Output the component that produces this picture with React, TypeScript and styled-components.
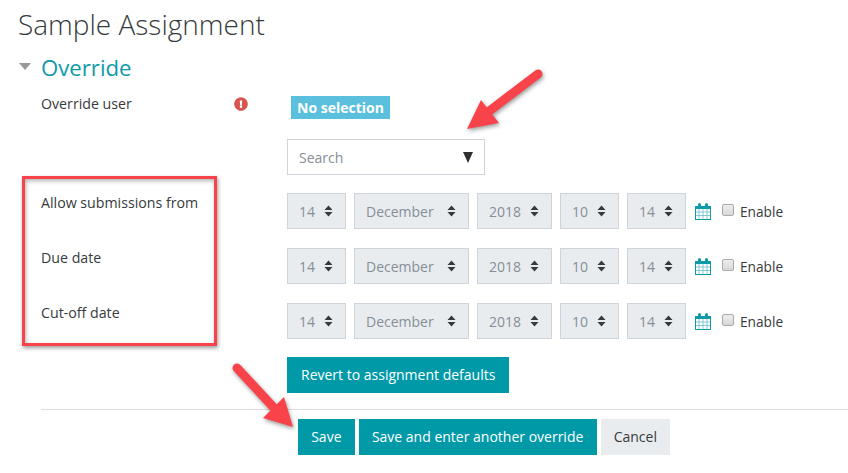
import React from "react";
import styled, { createGlobalStyle } from "styled-components";
import { FaExclamationCircle } from "react-icons/fa";

const GlobalStyle = createGlobalStyle`
  html, body {
    margin: 0;
    padding: 0;
    background: #fff;
    overflow: hidden;
  }

  body {
    font-family: "Open Sans", "Liberation Sans", sans-serif;
    color: #373a3c;
  }
`;

const Page = styled.div`
  position: relative;
  width: 848px;
  height: 473px;
  overflow: hidden;
`;

const Title = styled.h1`
  margin: 0 0 0 18px;
  padding-top: 5px;
  height: 45px;
  font-size: 28px;
  line-height: 38px;
  font-weight: 300;
  color: #373a3c;
`;

const SectionHeader = styled.div`
  display: flex;
  align-items: center;
  gap: 10px;
  margin-left: 19px;
  height: 36px;
`;

const Caret = styled.span`
  width: 0;
  height: 0;
  border-left: 6px solid transparent;
  border-right: 6px solid transparent;
  border-top: 7px solid #999;
  margin-top: -3px;
`;

const SectionTitle = styled.h2`
  margin: 0 0 1px;
  font-size: 22.2px;
  line-height: 34px;
  font-weight: 400;
  color: #0f9aa9;
`;

const Form = styled.div`
  margin-left: 41px;
  display: flex;
  flex-direction: column;
  padding-top: 7px;
`;

const Row = styled.div<{ $gap?: number }>`
  display: grid;
  grid-template-columns: 193px 53px 1fr;
  align-items: start;
  margin-bottom: ${(p) => p.$gap ?? 19}px;
`;

const Label = styled.div<{ $top?: number }>`
  margin-top: ${(p) => p.$top ?? 0}px;
  font-size: 14.2px;
  line-height: 20px;
`;

const Required = styled.div`
  margin-top: 4px;
  color: #d9534f;
  font-size: 14px;
  display: flex;
`;

const Badge = styled.span`
  justify-self: start;
  margin: 3px 0 0 4px;
  padding: 0 6px;
  height: 23px;
  line-height: 23px;
  background: #5bc0de;
  color: #fff;
  font-size: 14px;
  font-weight: 700;
`;

const SearchBox = styled.div`
  box-sizing: border-box;
  width: 198px;
  height: 36px;
  border: 1px solid #ced4da;
  display: flex;
  align-items: center;
  justify-content: space-between;
  padding: 0 11px;
  color: #868e96;
  font-size: 14px;
`;

const DownArrow = styled.span`
  width: 0;
  height: 0;
  border-left: 5.5px solid transparent;
  border-right: 5.5px solid transparent;
  border-top: 11px solid #2f2f2f;
`;

const Controls = styled.div`
  display: flex;
  align-items: center;
`;

const Select = styled.div<{ $width: number }>`
  box-sizing: border-box;
  width: ${(p) => p.$width}px;
  height: 36px;
  margin-right: 8px;
  padding: 0 12px 0 11px;
  display: flex;
  align-items: center;
  justify-content: space-between;
  background: #e9ecef;
  border: 1px solid #ced4da;
  color: #868e96;
  font-size: 14px;
`;

const CalendarWrap = styled.span`
  display: flex;
  margin: 0 11px 0 1px;
`;

const Checkbox = styled.span`
  box-sizing: border-box;
  width: 12px;
  height: 12px;
  margin: -3px 6px 0 0;
  border: 1px solid #a9a9a9;
  border-radius: 2px;
  background: linear-gradient(#eee, #d8d8d8);
`;

const CheckLabel = styled.span`
  font-size: 13.7px;
`;

const Button = styled.div<{ $secondary?: boolean }>`
  height: 36px;
  line-height: 36px;
  padding: 0 13.2px;
  font-size: 14px;
  background: ${(p) => (p.$secondary ? "#e9ecef" : "#0099a8")};
  color: ${(p) => (p.$secondary ? "#373a3c" : "#fff")};
`;

const RevertButton = styled(Button)`
  grid-column: 3;
  justify-self: start;
  padding: 0 14px;
`;

const Divider = styled.hr`
  margin: 0 0 9px 41px;
  border: 0;
  border-top: 1px solid #dfdfdf;
`;

const ButtonRow = styled.div`
  display: flex;
  gap: 4px;
  margin-left: 298px;
`;

const Highlight = styled.div`
  position: absolute;
  left: 22px;
  top: 176px;
  box-sizing: border-box;
  width: 195px;
  height: 170px;
  border: 3px solid #f9434a;
  box-shadow: 1px 2px 4px rgba(0, 0, 0, 0.4), inset 1px 2px 4px rgba(0, 0, 0, 0.3);
`;

const ArrowSvg = styled.svg`
  position: absolute;
  left: 0;
  top: 0;
  overflow: visible;
  filter: drop-shadow(1px 2px 2px rgba(0, 0, 0, 0.4));
`;

function Arrow({ tail, shaft, head }: { tail: string; shaft: string; head: string }) {
  return (
    <ArrowSvg width="848" height="473">
      <path d={`M${tail} L${shaft}`} stroke="#f9434a" strokeWidth="9" strokeLinecap="round" />
      <polygon points={head} fill="#f9434a" />
    </ArrowSvg>
  );
}

function SortIcon() {
  return (
    <svg width="9" height="12" viewBox="0 0 9 12">
      <path d="M4.5 0.5 L8.5 5 H0.5 Z M4.5 11.5 L8.5 7 H0.5 Z" fill="#373a3c" />
    </svg>
  );
}

function CalendarIcon() {
  return (
    <svg width="16" height="17" viewBox="0 0 16 17">
      <rect x="0.5" y="3.5" width="15" height="13" fill="#fff" stroke="#0f9aa9" />
      <rect x="0" y="3" width="16" height="3" fill="#0f9aa9" />
      <rect x="3" y="0" width="3" height="5" rx="1.5" fill="#0f9aa9" />
      <rect x="10" y="0" width="3" height="5" rx="1.5" fill="#0f9aa9" />
      <path
        d="M4 6v10M8 6v10M12 6v10M1 9h14M1 12.5h14"
        stroke="#0f9aa9"
        strokeWidth="0.7"
        opacity="0.7"
      />
    </svg>
  );
}

function DateRow({ label, gap }: { label: string; gap?: number }) {
  const fields: [string, number][] = [
    ["14", 59],
    ["December", 115],
    ["2018", 75],
    ["10", 59],
    ["14", 59],
  ];

  return (
    <Row $gap={gap}>
      <Label>{label}</Label>
      <span />
      <Controls>
        {fields.map(([value, width], i) => (
          <Select key={i} $width={width}>
            {value}
            <SortIcon />
          </Select>
        ))}
        <CalendarWrap>
          <CalendarIcon />
        </CalendarWrap>
        <Checkbox />
        <CheckLabel>Enable</CheckLabel>
      </Controls>
    </Row>
  );
}

export default function App() {
  return (
    <Page>
      <GlobalStyle />
      <Title>Sample Assignment</Title>
      <SectionHeader>
        <Caret />
        <SectionTitle>Override</SectionTitle>
      </SectionHeader>
      <Form>
        <Row $gap={20}>
          <Label $top={1}>Override user</Label>
          <Required>
            <FaExclamationCircle />
          </Required>
          <Badge>No selection</Badge>
        </Row>
        <Row $gap={18}>
          <span />
          <span />
          <SearchBox>
            Search
            <DownArrow />
          </SearchBox>
        </Row>
        <DateRow label="Allow submissions from" />
        <DateRow label="Due date" />
        <DateRow label="Cut-off date" gap={18} />
        <Row $gap={16}>
          <RevertButton>Revert to assignment defaults</RevertButton>
        </Row>
      </Form>
      <Divider />
      <ButtonRow>
        <Button>Save</Button>
        <Button>Save and enter another override</Button>
        <Button $secondary>Cancel</Button>
      </ButtonRow>
      <Highlight />
      <Arrow tail="538,74" shaft="488,112" head="481,100 499,123 467,129" />
      <Arrow tail="237,368" shaft="275,409" head="263,418 284,397 293,427" />
    </Page>
  );
}
